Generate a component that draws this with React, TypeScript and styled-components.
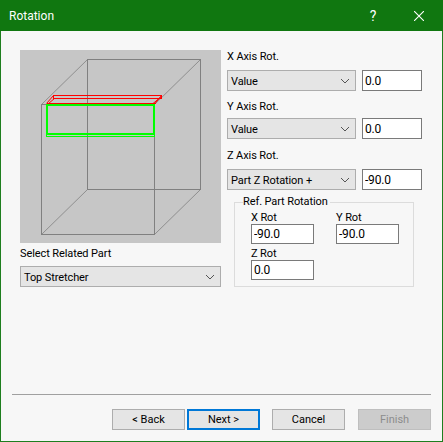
import React from "react";
import styled, { createGlobalStyle } from "styled-components";

const GlobalStyle = createGlobalStyle`
  html, body {
    margin: 0;
    padding: 0;
    background: #f0f0f0;
  }
  * {
    box-sizing: border-box;
  }
`;

const FONT = `Roboto, "Open Sans", "Liberation Sans", sans-serif`;

const Window = styled.div`
  width: 443px;
  height: 442px;
  display: flex;
  flex-direction: column;
  font-family: ${FONT};
  font-size: 11px;
  letter-spacing: -0.1px;
  color: #000;
  background: #f7f7f7;
`;

const TitleBar = styled.div`
  height: 31px;
  flex: none;
  display: flex;
  align-items: center;
  padding-left: 9px;
  background: #107710;
  color: #fff;
  font-size: 12px;
  letter-spacing: 0;
`;

const TitleText = styled.div`
  flex: 1;
`;

const HelpGlyph = styled.div`
  width: 46px;
  text-align: center;
  font-size: 14px;
`;

const CloseBox = styled.div`
  width: 46px;
  height: 31px;
  display: flex;
  align-items: center;
  justify-content: center;
  margin-right: 1px;
`;

const Body = styled.div`
  flex: 1;
  display: flex;
  flex-direction: column;
  border: 1px solid #1e7e1e;
  border-top: none;
  padding: 19px 11px 11px 11px;
`;

const Columns = styled.div`
  display: flex;
  align-items: flex-start;
  padding-left: 8px;
  gap: 6px;
`;

const LeftColumn = styled.div`
  width: 201px;
  display: flex;
  flex-direction: column;
`;

const RightColumn = styled.div`
  width: 195px;
  display: flex;
  flex-direction: column;
`;

const Preview = styled.div`
  width: 201px;
  height: 193px;
  background: #c6c6c6;
  svg {
    display: block;
  }
`;

const Label = styled.div<{ $top?: number; $bottom?: number }>`
  height: 14px;
  line-height: 14px;
  white-space: nowrap;
  margin-top: ${(p) => p.$top ?? 0}px;
  margin-bottom: ${(p) => p.$bottom ?? 0}px;
`;

const GroupLabel = styled.div<{ $top?: number }>`
  height: 12px;
  line-height: 12px;
  white-space: nowrap;
  margin-top: ${(p) => p.$top ?? 0}px;
`;

const Row = styled.div`
  display: flex;
  gap: 6px;
`;

const Select = styled.div<{ $width: number }>`
  width: ${(p) => p.$width}px;
  height: 21px;
  flex: none;
  display: flex;
  align-items: center;
  justify-content: space-between;
  padding: 1px 5px 0 3px;
  background: #e5e5e5;
  border: 1px solid #adadad;
  white-space: nowrap;
`;

const Field = styled.input<{ $width: number; $height?: number }>`
  display: block;
  width: ${(p) => p.$width}px;
  height: ${(p) => p.$height ?? 21}px;
  padding: 0 2px;
  margin: 0;
  border: 1px solid #7a7a7a;
  border-radius: 0;
  outline: none;
  background: #fff;
  font: inherit;
  font-size: 12px;
  letter-spacing: -0.2px;
  color: #000;
`;

const GroupBox = styled.fieldset`
  width: 180px;
  height: 92px;
  margin: 5px 0 0 7px;
  padding: 0 0 0 16px;
  border: 1px solid #dcdcdc;
  display: block;
`;

const GroupLegend = styled.legend`
  margin-left: -8px;
  padding: 0 2px 0 0;
  height: 14px;
  line-height: 14px;
`;

const GroupGrid = styled.div`
  display: grid;
  grid-template-columns: 85px 63px;
  margin-top: 3px;
`;

const Footer = styled.div`
  margin-top: auto;
`;

const Divider = styled.div`
  height: 1px;
  background: #a0a0a0;
  margin-bottom: 14px;
`;

const ButtonRow = styled.div`
  display: flex;
  justify-content: flex-end;
`;

const DialogButton = styled.button<{ $focus?: boolean; $gap?: number }>`
  width: 73px;
  height: 21px;
  margin: 0 0 0 ${(p) => p.$gap ?? 0}px;
  padding: 0;
  font: inherit;
  color: #000;
  background: #e5e5e5;
  border: ${(p) => (p.$focus ? "2px solid #0078d7" : "1px solid #adadad")};
  border-radius: 0;

  &:disabled {
    color: #8c8c8c;
    background: #cccccc;
    border-color: #bfbfbf;
  }
`;

const Chevron = () => (
  <svg width="10" height="6" viewBox="0 0 10 6" fill="none">
    <path d="M1 1l4 4 4-4" stroke="#555" strokeWidth="1" />
  </svg>
);

// wireframe drawing of the cabinet, with the selected part in red and green
const CabinetDrawing = () => (
  <svg width="201" height="193" viewBox="0 0 201 193" fill="none" shapeRendering="crispEdges">
    <g stroke="#808080">
      <rect x="21.5" y="54.5" width="113" height="130" />
      <rect x="67.5" y="9.5" width="113" height="130" />
    </g>
    <g stroke="#808080" shapeRendering="auto" strokeWidth="0.8">
      <path d="M21.5 54.5L67.5 9.5M134.5 54.5L180.5 9.5M21.5 184.5L67.5 139.5M134.5 184.5L180.5 139.5" />
    </g>
    <g stroke="#ff0000">
      <rect x="33.5" y="45.5" width="108" height="3" />
      <path d="M26.5 53.5H135.5" />
      <g shapeRendering="auto">
        <path d="M26.5 53.5L33.5 45.5M28.5 53.5L34.5 48.5M135 53.5L141.5 45.5M133 53.5L141.5 46.5" />
      </g>
    </g>
    <g stroke="#00ff00">
      <rect x="27" y="55" width="107" height="29" strokeWidth="2" />
      <path d="M26.5 86.5H134.5M26.5 84V87M134.5 84V87" />
    </g>
  </svg>
);

const CloseIcon = () => (
  <svg width="10" height="10" viewBox="0 0 10 10" fill="none">
    <path d="M0 0l10 10M10 0L0 10" stroke="#fff" strokeWidth="1.1" />
  </svg>
);

const App: React.FC = () => (
  <Window>
    <GlobalStyle />
    <TitleBar>
      <TitleText>Rotation</TitleText>
      <HelpGlyph>?</HelpGlyph>
      <CloseBox>
        <CloseIcon />
      </CloseBox>
    </TitleBar>
    <Body>
      <Columns>
        <LeftColumn>
          <Preview>
            <CabinetDrawing />
          </Preview>
          <Label $top={4} $bottom={5}>Select Related Part</Label>
          <Select $width={201}>
            Top Stretcher
            <Chevron />
          </Select>
        </LeftColumn>
        <RightColumn>
          <Label $bottom={6}>X Axis Rot.</Label>
          <Row>
            <Select $width={129}>
              Value
              <Chevron />
            </Select>
            <Field $width={60} value="0.0" readOnly />
          </Row>
          <Label $top={9} $bottom={4}>Y Axis Rot.</Label>
          <Row>
            <Select $width={129}>
              Value
              <Chevron />
            </Select>
            <Field $width={60} value="0.0" readOnly />
          </Row>
          <Label $top={10} $bottom={6}>Z Axis Rot.</Label>
          <Row>
            <Select $width={129}>
              Part Z Rotation +
              <Chevron />
            </Select>
            <Field $width={60} value="-90.0" readOnly />
          </Row>
          <GroupBox>
            <GroupLegend>Ref. Part Rotation</GroupLegend>
            <GroupGrid>
              <div>
                <GroupLabel>X Rot</GroupLabel>
                <Field $width={63} $height={20} value="-90.0" readOnly />
              </div>
              <div>
                <GroupLabel>Y Rot</GroupLabel>
                <Field $width={63} $height={20} value="-90.0" readOnly />
              </div>
              <div>
                <GroupLabel $top={4}>Z Rot</GroupLabel>
                <Field $width={63} $height={20} value="0.0" readOnly />
              </div>
            </GroupGrid>
          </GroupBox>
        </RightColumn>
      </Columns>
      <Footer>
        <Divider />
        <ButtonRow>
          <DialogButton>&lt; Back</DialogButton>
          <DialogButton $focus $gap={2}>Next &gt;</DialogButton>
          <DialogButton $gap={12}>Cancel</DialogButton>
          <DialogButton $gap={13} disabled>Finish</DialogButton>
        </ButtonRow>
      </Footer>
    </Body>
  </Window>
);

export default App;
